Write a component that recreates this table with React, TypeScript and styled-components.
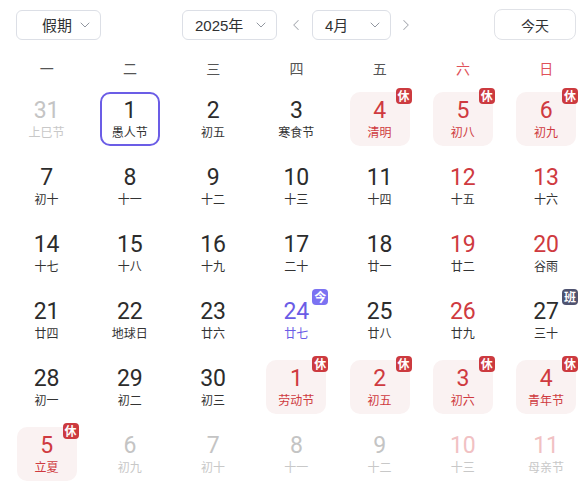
import React from "react";
import styled, { createGlobalStyle, css } from "styled-components";
import { ChevronDown, ChevronLeft, ChevronRight } from "lucide-react";

const Global = createGlobalStyle`
  html, body { margin: 0; padding: 0; overflow: hidden; background: #fff; }
  body { font-family: "Noto Sans CJK SC", "Noto Sans", sans-serif; }
`;

const Page = styled.div`
  width: 585px;
  height: 491px;
  padding-top: 9px;
  box-sizing: border-box;
`;

const Header = styled.div`
  display: flex;
  align-items: center;
  justify-content: space-between;
  padding: 0 9px 0 16px;
  height: 31px;
`;

const Select = styled.div<{ $w: number; $pl: number }>`
  box-sizing: border-box;
  width: ${(p) => p.$w}px;
  height: 30px;
  border: 1px solid #dcdfe6;
  border-radius: 6px;
  display: flex;
  align-items: center;
  justify-content: space-between;
  padding: 0 7px 0 ${(p) => p.$pl}px;
  font-size: 15px;
  color: #303133;
  font-family: "Liberation Sans", "Noto Sans CJK SC", sans-serif;
  svg { color: #8a8f99; }
`;

const Group = styled.div`
  display: flex;
  align-items: center;
  margin-left: 3px;
`;

const Arrow = styled.div<{ $ml: number; $mr: number }>`
  width: 20px;
  display: flex;
  justify-content: center;
  margin: 0 ${(p) => p.$mr}px 0 ${(p) => p.$ml}px;
  color: #a8abb2;
`;

const TodayBtn = styled.div`
  box-sizing: border-box;
  width: 82px;
  height: 31px;
  border: 1px solid #e0e2e7;
  border-radius: 8px;
  display: flex;
  align-items: center;
  justify-content: center;
  font-size: 14px;
  color: #303133;
`;

const Weekdays = styled.div`
  display: grid;
  grid-template-columns: repeat(7, 83.25px);
  padding-left: 5px;
  margin-top: 16px;
  height: 24px;
  align-items: center;
`;

const Weekday = styled.div<{ $we: boolean }>`
  text-align: center;
  font-size: 14px;
  color: ${(p) => (p.$we ? "#e0525a" : "#555")};
`;

const Grid = styled.div`
  display: grid;
  grid-template-columns: repeat(7, 83.25px);
  grid-auto-rows: 54px;
  row-gap: 13px;
  padding-left: 5px;
  margin-top: 12px;
`;

const Cell = styled.div<{ $holiday: boolean; $selected: boolean }>`
  position: relative;
  justify-self: center;
  box-sizing: border-box;
  width: 60px;
  height: 54px;
  border-radius: 10px;
  display: flex;
  flex-direction: column;
  align-items: center;
  justify-content: center;
  border: 2px solid transparent;
  ${(p) => p.$holiday && css`background: #faf2f2;`}
  ${(p) => p.$selected && css`border-color: #6b5de6;`}
`;

const Num = styled.div<{ $color: string }>`
  font-family: Roboto, "Noto Sans", sans-serif;
  font-weight: 400;
  font-size: 23px;
  line-height: 26px;
  color: ${(p) => p.$color};
`;

const Lunar = styled.div<{ $color: string }>`
  font-size: 12px;
  line-height: 16px;
  color: ${(p) => p.$color};
`;

const Badge = styled.div<{ $bg: string }>`
  position: absolute;
  top: -6px;
  right: -4px;
  width: 16px;
  height: 16px;
  border-radius: 4px;
  background: ${(p) => p.$bg};
  color: #fff;
  font-size: 12px;
  font-weight: 700;
  line-height: 16px;
  text-align: center;
`;

type Day = {
  d: number;
  l: string;
  other?: boolean;
  we?: boolean;
  hol?: boolean;
  work?: boolean;
  today?: boolean;
  sel?: boolean;
};

const days: Day[] = [
  { d: 31, l: "上巳节", other: true },
  { d: 1, l: "愚人节", sel: true },
  { d: 2, l: "初五" },
  { d: 3, l: "寒食节" },
  { d: 4, l: "清明", hol: true },
  { d: 5, l: "初八", hol: true, we: true },
  { d: 6, l: "初九", hol: true, we: true },
  { d: 7, l: "初十" },
  { d: 8, l: "十一" },
  { d: 9, l: "十二" },
  { d: 10, l: "十三" },
  { d: 11, l: "十四" },
  { d: 12, l: "十五", we: true },
  { d: 13, l: "十六", we: true },
  { d: 14, l: "十七" },
  { d: 15, l: "十八" },
  { d: 16, l: "十九" },
  { d: 17, l: "二十" },
  { d: 18, l: "廿一" },
  { d: 19, l: "廿二", we: true },
  { d: 20, l: "谷雨", we: true },
  { d: 21, l: "廿四" },
  { d: 22, l: "地球日" },
  { d: 23, l: "廿六" },
  { d: 24, l: "廿七", today: true },
  { d: 25, l: "廿八" },
  { d: 26, l: "廿九", we: true },
  { d: 27, l: "三十", work: true },
  { d: 28, l: "初一" },
  { d: 29, l: "初二" },
  { d: 30, l: "初三" },
  { d: 1, l: "劳动节", hol: true },
  { d: 2, l: "初五", hol: true },
  { d: 3, l: "初六", hol: true, we: true },
  { d: 4, l: "青年节", hol: true, we: true },
  { d: 5, l: "立夏", hol: true },
  { d: 6, l: "初九", other: true },
  { d: 7, l: "初十", other: true },
  { d: 8, l: "十一", other: true },
  { d: 9, l: "十二", other: true },
  { d: 10, l: "十三", other: true, we: true },
  { d: 11, l: "母亲节", other: true, we: true },
];

const RED = "#cf3a40";
const DARK = "#2c2c2c";
const PURPLE = "#6a5ce6";

function colors(day: Day): [string, string] {
  if (day.other) return [day.we ? "#f1c1c3" : "#c4c4c4", "#c8c8c8"];
  if (day.today) return [PURPLE, PURPLE];
  if (day.hol) return [RED, RED];
  if (day.we) return [RED, "#333"];
  return [DARK, "#333"];
}

const weekdays = ["一", "二", "三", "四", "五", "六", "日"];

export default function App() {
  return (
    <Page>
      <Global />
      <Header>
        <Select $w={85} $pl={25}>
          假期
          <ChevronDown size={16} strokeWidth={1.4} />
        </Select>
        <Group>
          <Select $w={95} $pl={12}>
            2025年
            <ChevronDown size={16} strokeWidth={1.4} />
          </Select>
          <Arrow $ml={9} $mr={6}>
            <ChevronLeft size={18} strokeWidth={1.4} />
          </Arrow>
          <Select $w={79} $pl={12}>
            4月
            <ChevronDown size={16} strokeWidth={1.4} />
          </Select>
          <Arrow $ml={5} $mr={0}>
            <ChevronRight size={18} strokeWidth={1.4} />
          </Arrow>
        </Group>
        <TodayBtn>今天</TodayBtn>
      </Header>
      <Weekdays>
        {weekdays.map((w, i) => (
          <Weekday key={w} $we={i >= 5}>
            {w}
          </Weekday>
        ))}
      </Weekdays>
      <Grid>
        {days.map((day, i) => {
          const [nc, lc] = colors(day);
          return (
            <Cell key={i} $holiday={!!day.hol} $selected={!!day.sel}>
              <Num $color={nc}>{day.d}</Num>
              <Lunar $color={lc}>{day.l}</Lunar>
              {day.hol && <Badge $bg="#cc3a3f">休</Badge>}
              {day.today && <Badge $bg="#7b72f2">今</Badge>}
              {day.work && <Badge $bg="#4f5370">班</Badge>}
            </Cell>
          );
        })}
      </Grid>
    </Page>
  );
}
